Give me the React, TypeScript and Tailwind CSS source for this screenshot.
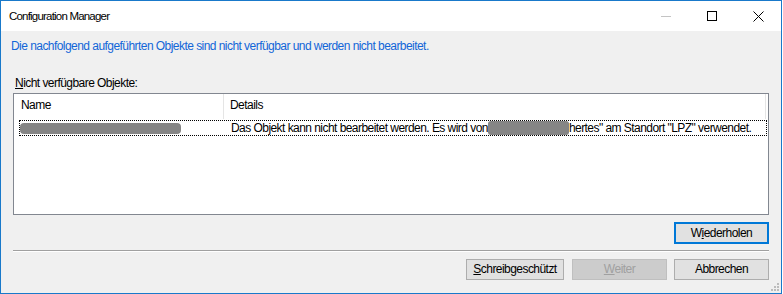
import React from "react";

const font = { fontFamily: '"Liberation Sans", Arial, sans-serif' };

function Btn({
  children,
  width,
  disabled,
  focused,
  className,
}: {
  children: React.ReactNode;
  width: string;
  disabled?: boolean;
  focused?: boolean;
  className?: string;
}) {
  const base = "flex items-center justify-center text-[12px] leading-[15px] tracking-[-0.55px] box-border shrink-0 ";
  const look = disabled
    ? "bg-[#cccccc] border border-[#bfbfbf] text-[#a0a0a0]"
    : focused
    ? "bg-[#e1e1e1] border-2 border-[#0078d7] text-black"
    : "bg-[#e1e1e1] border border-[#adadad] text-black";
  return <div className={base + look + " " + width + " " + (className ?? "")}>{children}</div>;
}

export default function App() {
  return (
    <div className="w-[783px] h-[294px] bg-white" style={font}>
      <div className="w-[782px] h-[294px] border border-[#1979ca] box-border flex flex-col bg-[#f0f0f0] tracking-[-0.55px]">
        {/* title bar */}
        <div className="h-[30px] bg-white flex items-center shrink-0">
          <div className="pl-[8px] text-[11.5px] tracking-[-0.8px] text-black flex-1 leading-[15px]">Configuration Manager</div>
          <div className="flex h-[30px]">
            <div className="w-[46px] h-[30px] flex items-center justify-center">
              <div className="w-[10px] h-[1px] bg-[#c4c4c4]" />
            </div>
            <div className="w-[46px] h-[30px] flex items-center justify-center">
              <div className="w-[10px] h-[10px] border border-black" />
            </div>
            <div className="w-[46px] h-[30px] flex items-center justify-center">
              <svg width="11" height="11" viewBox="0 0 11 11">
                <path d="M0.5 0.5 L10.5 10.5 M10.5 0.5 L0.5 10.5" stroke="#000" strokeWidth="1" fill="none" />
              </svg>
            </div>
          </div>
        </div>

        {/* body */}
        <div className="flex-1 flex flex-col pt-[8px] relative">
          <div className="pl-[10px] text-[12px] leading-[15px] text-[#1266d8]">
            Die nachfolgend aufgeführten Objekte sind nicht verfügbar und werden nicht bearbeitet.
          </div>
          <div className="pl-[14px] mt-[22px] text-[12px] leading-[15px] text-black">
            <span className="underline">N</span>icht verfügbare Objekte:
          </div>

          {/* list */}
          <div className="ml-[12px] mt-[2px] w-[756px] h-[122px] border border-[#828790] bg-white box-border flex flex-col overflow-hidden">
            <div className="h-[25px] flex text-[12px] leading-[15px] text-black shrink-0">
              <div className="w-[210px] shrink-0 pl-[7px] pt-[4px] border-r border-[#e5e5e5]">Name</div>
              <div className="flex-1 pl-[6px] pt-[4px] border-r border-[#e5e5e5] mr-[2px]">Details</div>
            </div>
            <div className="ml-[5px] mr-[1px] h-[16px] border border-dotted border-black flex items-center text-[12px] leading-[14px] text-black mt-[1px] overflow-hidden">
              <div className="w-[205px] shrink-0 flex items-center">
                <div className="w-[161px] h-[11px] bg-[#858585] rounded-[4px] blur-[0.6px]" />
              </div>
              <div className="pl-[6px] whitespace-nowrap flex items-center shrink-0">
                Das Objekt kann nicht bearbeitet werden. Es wird von
                <span className="inline-block w-[81px] h-[14px] bg-[#858585] rounded-[3px] blur-[0.6px]" />
                hertes" am Standort "LPZ" verwendet.
              </div>
            </div>
          </div>

          {/* Wiederholen */}
          <div className="flex justify-end mr-[12px] mt-[7px]">
            <Btn width="w-[95px] h-[22px]" focused>
              W<span className="underline">i</span>ederholen
            </Btn>
          </div>

          {/* separator */}
          <div className="ml-[12px] mr-[12px] mt-[6px] h-[1px] bg-[#a0a0a0]" />
          <div className="ml-[12px] mr-[12px] h-[1px] bg-white" />

          {/* bottom buttons */}
          <div className="flex justify-end mr-[12px] mt-[7px]">
            <Btn width="w-[98px] h-[21px]">
              <span className="underline">S</span>chreibgeschützt
            </Btn>
            <Btn width="w-[95px] h-[21px]" disabled className="ml-[8px]">
              <span className="underline">W</span>eiter
            </Btn>
            <Btn width="w-[95px] h-[21px]" className="ml-[7px]">
              Abbrechen
            </Btn>
          </div>

          {/* size grip */}
          <svg className="absolute right-[2px] bottom-[2px]" width="8" height="8" viewBox="0 0 8 8">
            <rect x="6" y="0" width="2" height="2" fill="#bcbcbc" />
            <rect x="3" y="3" width="2" height="2" fill="#bcbcbc" />
            <rect x="6" y="3" width="2" height="2" fill="#bcbcbc" />
            <rect x="0" y="6" width="2" height="2" fill="#bcbcbc" />
            <rect x="3" y="6" width="2" height="2" fill="#bcbcbc" />
            <rect x="6" y="6" width="2" height="2" fill="#bcbcbc" />
          </svg>
        </div>
      </div>
    </div>
  );
}
